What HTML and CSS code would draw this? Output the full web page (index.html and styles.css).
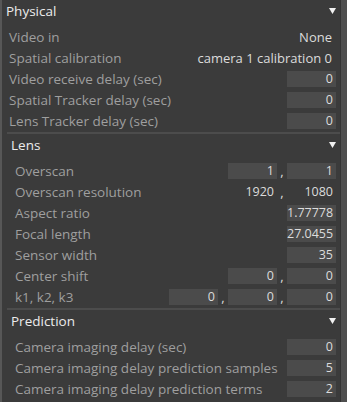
FILE: index.html
```html
<!DOCTYPE html>
<html>
<head>
<meta charset="utf-8">
<link rel="stylesheet" href="styles.css">
</head>
<body>
<div class="frame">
  <div class="edge-left"></div>
  <div class="main">
    <section class="group">
      <div class="head head-outer"><span>Physical</span><svg class="tri" width="7" height="6" viewBox="0 0 7 6"><polygon points="0,0 7,0 3.5,6" fill="#f2f2f2"/></svg></div>
      <div class="rows rows-outer">
        <div class="row"><span class="label">Video in</span><span class="val">None</span></div>
        <div class="row"><span class="label">Spatial calibration</span><span class="val">camera 1 calibration 0</span></div>
        <div class="row"><span class="label">Video receive delay (sec)</span><div class="fields"><span class="box">0</span></div></div>
        <div class="row"><span class="label">Spatial Tracker delay (sec)</span><div class="fields"><span class="box">0</span></div></div>
        <div class="row"><span class="label">Lens Tracker delay (sec)</span><div class="fields"><span class="box">0</span></div></div>
      </div>
    </section>
    <div class="sep"></div>
    <section class="group">
      <div class="head head-inner"><span>Lens</span><svg class="tri" width="7" height="6" viewBox="0 0 7 6"><polygon points="0,0 7,0 3.5,6" fill="#f2f2f2"/></svg></div>
      <div class="rows rows-inner">
        <div class="row"><span class="label">Overscan</span><div class="fields"><span class="box">1</span><span class="comma">,</span><span class="box">1</span></div></div>
        <div class="row"><span class="label">Overscan resolution</span><div class="fields"><span class="box plain">1920</span><span class="comma">,</span><span class="box plain">1080</span></div></div>
        <div class="row"><span class="label">Aspect ratio</span><div class="fields"><span class="box">1.77778</span></div></div>
        <div class="row"><span class="label">Focal length</span><div class="fields"><span class="box">27.0455</span></div></div>
        <div class="row"><span class="label">Sensor width</span><div class="fields"><span class="box">35</span></div></div>
        <div class="row"><span class="label">Center shift</span><div class="fields"><span class="box">0</span><span class="comma">,</span><span class="box">0</span></div></div>
        <div class="row"><span class="label">k1, k2, k3</span><div class="fields"><span class="box">0</span><span class="comma">,</span><span class="box">0</span><span class="comma">,</span><span class="box">0</span></div></div>
      </div>
    </section>
    <div class="sep"></div>
    <section class="group">
      <div class="head head-inner"><span>Prediction</span><svg class="tri" width="7" height="6" viewBox="0 0 7 6"><polygon points="0,0 7,0 3.5,6" fill="#f2f2f2"/></svg></div>
      <div class="rows rows-inner">
        <div class="row"><span class="label">Camera imaging delay (sec)</span><div class="fields"><span class="box">0</span></div></div>
        <div class="row"><span class="label">Camera imaging delay prediction samples</span><div class="fields"><span class="box">5</span></div></div>
        <div class="row"><span class="label">Camera imaging delay prediction terms</span><div class="fields"><span class="box">2</span></div></div>
      </div>
    </section>
  </div>
  <div class="edge-right"></div>
</div>
</body>
</html>
```
FILE: styles.css
```css
html, body {
  margin: 0;
  padding: 0;
  background: #3b3b3b;
}
body {
  font-family: "Open Sans", "Noto Sans", sans-serif;
  font-size: 13px;
  width: 347px;
  height: 402px;
  overflow: hidden;
}
.frame {
  display: flex;
  height: 402px;
}
.edge-left {
  width: 2px;
  background: #575757;
}
.main {
  flex: 1;
  display: flex;
  flex-direction: column;
  background: #3b3b3b;
}
.edge-right {
  width: 6px;
  border-left: 1px solid #333333;
  background: #4e4e4e;
}
.head {
  height: 21px;
  display: flex;
  align-items: center;
  justify-content: space-between;
  padding-right: 4px;
  color: #ececec;
  font-size: 13.5px;
}
.head-outer { padding-left: 4px; }
.head-inner { padding-left: 9px; }
.tri { display: block; margin-top: 1px; }
.rows {
  display: flex;
  flex-direction: column;
  padding-top: 5px;
  padding-bottom: 1px;
  padding-right: 4px;
}
.rows-outer { padding-left: 7px; }
.rows-inner { padding-left: 13px; }
.row {
  height: 21px;
  display: flex;
  align-items: center;
  justify-content: space-between;
  white-space: nowrap;
}
.label {
  color: #9f9f9f;
  font-size: 13.5px;
}
.val {
  color: #dcdcdc;
  font-size: 13px;
  padding-right: 4px;
}
.fields {
  display: flex;
  align-items: center;
}
.box {
  width: 49px;
  height: 16px;
  line-height: 16px;
  box-sizing: border-box;
  padding-right: 3px;
  text-align: right;
  background: #4b4b4b;
  color: #dcdcdc;
  font-size: 12.5px;
}
.box.plain { background: transparent; }
.comma {
  width: 10px;
  text-align: center;
  color: #dcdcdc;
  font-size: 13px;
  line-height: 16px;
}
.sep {
  height: 2px;
  margin-left: 5px;
  background: #4c4c4c;
}
```
